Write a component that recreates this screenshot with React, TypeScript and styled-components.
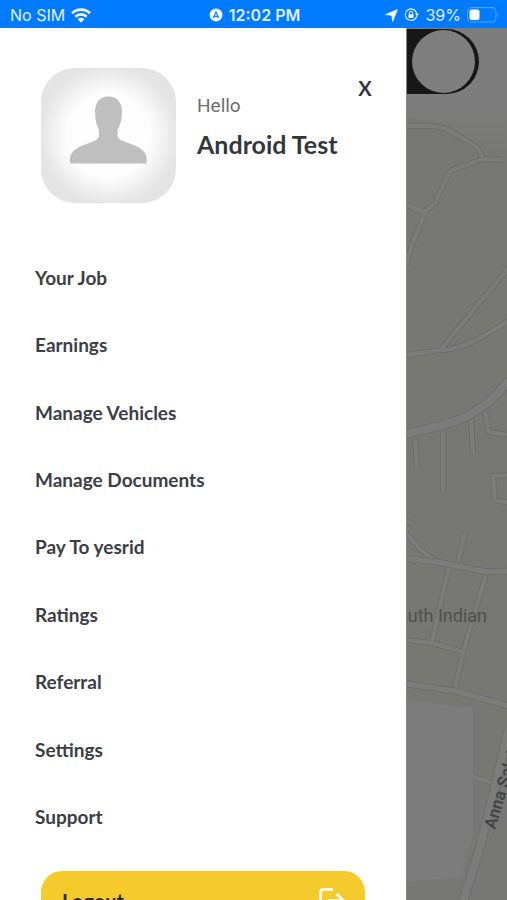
import React, { useState } from "react";
import styled, { createGlobalStyle } from "styled-components";

const GlobalStyle = createGlobalStyle`
  * { box-sizing: border-box; }
  body { margin: 0; background: #ffffff; font-family: Lato, "Noto Sans", sans-serif; }
`;

const Screen = styled.div`
  display: flex;
  flex-direction: column;
  height: 100vh;
  overflow: hidden;
`;

const StatusBar = styled.header`
  flex: none;
  display: grid;
  grid-template-columns: 1fr auto 1fr;
  align-items: center;
  height: 28px;
  padding: 2px 8px 0 10px;
  background: #007aff;
  color: #e2f1ff;
  font: 400 16px/20px Inter, sans-serif;
`;

const StatusGroup = styled.div<{ $end?: boolean }>`
  display: flex;
  align-items: center;
  justify-content: ${(p) => (p.$end ? "flex-end" : "flex-start")};
  gap: 6px;
  white-space: nowrap;
`;

const Clock = styled.time`
  font-weight: 600;
`;

const Body = styled.div`
  flex: 1;
  display: flex;
  min-height: 0;
`;

const Drawer = styled.aside`
  flex: 0 0 80%;
  display: flex;
  flex-direction: column;
  overflow-y: auto;
  scrollbar-width: none;
  background: #ffffff;
  color: #33363d;
`;

const Profile = styled.section`
  flex: none;
  display: flex;
  align-items: flex-start;
  padding: 40px 33px 0 41px;
`;

const Avatar = styled.div`
  flex: none;
  width: 135px;
  height: 135px;
  border-radius: 34px;
  overflow: hidden;
  background: radial-gradient(circle at 50% 50%, #ffffff 0, #fdfdfd 42px, #e4e4e4 70px);
`;

const Greeting = styled.div`
  flex: 1;
  padding: 26px 0 0 21px;
  white-space: nowrap;
`;

const Hello = styled.p`
  margin: 0;
  color: #6e6e6e;
  font: 400 19px/24px Roboto, sans-serif;
`;

const UserName = styled.h1`
  margin: 12px 0 0;
  font-size: 25px;
  line-height: 28px;
  font-weight: 700;
`;

const CloseButton = styled.button`
  margin-top: 8px;
  padding: 0 1px;
  border: 0;
  background: none;
  color: #33363d;
  font: 700 20px/24px Lato, sans-serif;
  cursor: pointer;
`;

const Menu = styled.nav`
  flex: none;
  display: grid;
  grid-auto-rows: 1fr;
  min-height: 607px;
  margin-top: 41px;
`;

const MenuLink = styled.a`
  display: flex;
  align-items: center;
  padding: 0 35px;
  color: #3b3e44;
  font-size: 19px;
  line-height: 24px;
  font-weight: 700;
  text-decoration: none;
`;

const LogoutButton = styled.button`
  flex: none;
  display: flex;
  align-items: center;
  justify-content: space-between;
  height: 60px;
  margin: 20px 41px 24px;
  padding: 0 19px 0 21px;
  border: 0;
  border-radius: 21px;
  background: #f5ca2c;
  color: #2c2c22;
  font: 700 20px/24px Lato, sans-serif;
  cursor: pointer;
`;

const MapPane = styled.main`
  position: relative;
  flex: 1;
  min-width: 0;
  overflow: hidden;
  background: #777774;
  border-left: 1px solid #858585;
`;

const MapDrawing = styled.svg`
  display: block;
  overflow: hidden;
`;

const OnlineSwitch = styled.input`
  appearance: none;
  position: absolute;
  top: 1px;
  left: -58px;
  width: 130px;
  height: 65px;
  margin: 0;
  border-radius: 33px;
  background: #171717;
  cursor: pointer;

  &::before {
    content: "";
    position: absolute;
    top: 1px;
    right: 4px;
    width: 63px;
    height: 63px;
    border-radius: 50%;
    background: #7e7e7e;
  }

  &:not(:checked)::before {
    right: auto;
    left: 3px;
  }
`;

const menuItems = [
  "Your Job",
  "Earnings",
  "Manage Vehicles",
  "Manage Documents",
  "Pay To yesrid",
  "Ratings",
  "Referral",
  "Settings",
  "Support",
];

const streets = [
  "M0 98H24Q37 99 44 103L71 119L77 130",
  "M97 132L76 131L44 143L36 160L29 175L19 184L0 177",
  "M19 184L6 217L0 237",
  "M103 240L69 280L36 320",
  "M0 327L36 322Q51 322 74 310L103 293",
  "M9 412L11 439",
  "M37 404V464",
  "M65 390L67 425",
  "M79 384L83 404L103 407",
  "M104 447L87 448L89 472L104 475",
  "M0 493L7 496",
  "M0 505L17 524L31 534",
  "M59 504L52 534",
  "M43 539L26 614",
  "M80 547L57 624L49 660",
  "M0 612L26 615L57 624",
  "M68 749L86 755",
];

const avenues = [
  "M0 531L31 534L81 544L103 543",
  "M0 656L49 663L103 678",
];

const highways = [
  "M0 406L37 397Q57 392 71 382Q86 374 103 352",
  "M103 700L82 789L71 829L57 874",
];

function Roads({ paths, width }: { paths: string[]; width: number }) {
  return (
    <g fill="none" strokeLinejoin="round">
      <path d={paths.join("")} stroke="#6d6d6c" strokeWidth={width + 2} />
      <path d={paths.join("")} stroke="#7b7c7b" strokeWidth={width} />
    </g>
  );
}

function StreetMap() {
  return (
    <MapDrawing width="101" height="872" viewBox="1 0 101 872" role="img" aria-label="Street map">
      <defs>
        <linearGradient id="topFade" x1="0" y1="0" x2="0" y2="1">
          <stop offset="0.6" stopColor="#7d7d7d" />
          <stop offset="1" stopColor="#7d7d7d" stopOpacity="0" />
        </linearGradient>
      </defs>
      <path d="M0 0H102V127L76 121L44 96L0 90Z" fill="url(#topFade)" />
      <path d="M0 672L67 680V806L55 850L0 853Z" fill="#7c7c7c" />
      <Roads paths={streets} width={4} />
      <Roads paths={avenues} width={5} />
      <Roads paths={highways} width={8} />
      <text x="81" y="594" textAnchor="end" fill="#505050" fontFamily="Roboto, sans-serif" fontSize="18">
        South Indian
      </text>
      <text
        transform="translate(89 802) rotate(-73)"
        fill="#3d4244"
        fontFamily="Roboto, sans-serif"
        fontWeight="500"
        fontSize="17"
      >
        Anna Salai
      </text>
    </MapDrawing>
  );
}

function WifiIcon() {
  return (
    <svg width="20" height="15" viewBox="0 0 20 15" aria-label="Wi-Fi">
      <g fill="none" stroke="#f2f9ff" strokeWidth="2.7">
        <path d="M1 5.2a13 13 0 0 1 18 0" />
        <path d="M4.3 8.7a8.3 8.3 0 0 1 11.4 0" />
      </g>
      <path d="M10 14.7l-3.4-3.5a4.9 4.9 0 0 1 6.8 0z" fill="#f2f9ff" />
    </svg>
  );
}

function NavigationBadge() {
  return (
    <svg width="14" height="14" viewBox="0 0 14 14" aria-hidden="true">
      <circle cx="7" cy="7" r="6.5" fill="#f2f9ff" />
      <path d="M7 2.5l3.4 7.7L7 8.7l-3.4 1.5z" fill="#007aff" />
      <path d="M7 5.2l1.2 2.8L7 7.5l-1.2.5z" fill="#f2f9ff" />
    </svg>
  );
}

function LocationIcon() {
  return (
    <svg width="13" height="13" viewBox="0 0 13 13" aria-hidden="true">
      <path d="M12.5.5L7.7 12.6L6.8 6.4L.4 5.6z" fill="#f2f9ff" stroke="#f2f9ff" strokeWidth=".6" strokeLinejoin="round" />
    </svg>
  );
}

function RotationLockIcon() {
  return (
    <svg width="15" height="14" viewBox="0 0 15 14" aria-hidden="true">
      <path d="M11.8 3.1A5.8 5.8 0 1 0 12.8 8M3.2 2.6A5.8 5.8 0 0 1 12.8 6" fill="none" stroke="#d5eaff" strokeWidth="1.2" />
      <path d="M10.9 5.7h4L13 8.5z" fill="#d5eaff" />
      <rect x="4.5" y="6.2" width="5" height="3.8" rx=".6" fill="#f2f9ff" />
      <path d="M5.4 6.3V5a1.6 1.6 0 0 1 3.2 0v1.3" fill="none" stroke="#f2f9ff" />
    </svg>
  );
}

function BatteryIcon() {
  return (
    <svg width="32" height="16" viewBox="0 0 32 16" aria-hidden="true">
      <rect x=".6" y=".6" width="28.3" height="14.4" rx="4" fill="none" stroke="#4da3ff" strokeWidth="1.1" />
      <rect x="2.5" y="2.5" width="10" height="10.6" rx="2" fill="#ffffff" />
      <path d="M30.2 5.3q2.3 2.5 0 5z" fill="#4da3ff" />
    </svg>
  );
}

function Silhouette() {
  return (
    <svg width="135" height="135" viewBox="0 0 135 135" role="img" aria-label="Profile picture">
      <path
        d="M29 95.5V89Q31 82 40 78L53 73Q58 71 58 67V62Q54 55 54 43Q55 28.5 67.5 28.5Q80 28.5 81 43Q81 55 76.5 62V67Q76.5 71 82 73L95 78Q104 82 105.5 89V95.5Z"
        fill="#bfbfbf"
      />
    </svg>
  );
}

function ExitIcon() {
  return (
    <svg width="28" height="28" viewBox="0 0 28 28" fill="none" stroke="#fffbea" strokeWidth="3" strokeLinejoin="round" aria-hidden="true">
      <path d="M15 2.5H5.5Q2.5 2.5 2.5 5.5V21.5Q2.5 24.5 5.5 24.5H15" />
      <path d="M10 13.5H25M18.500 7L25.500 13.5L18.500 20" />
    </svg>
  );
}

export default function App() {
  const [online, setOnline] = useState(true);

  return (
    <Screen>
      <GlobalStyle />
      <StatusBar>
        <StatusGroup>
          <span>No SIM</span>
          <WifiIcon />
        </StatusGroup>
        <StatusGroup>
          <NavigationBadge />
          <Clock>12:02 PM</Clock>
        </StatusGroup>
        <StatusGroup $end>
          <LocationIcon />
          <RotationLockIcon />
          <span>39%</span>
          <BatteryIcon />
        </StatusGroup>
      </StatusBar>
      <Body>
        <Drawer>
          <Profile>
            <Avatar>
              <Silhouette />
            </Avatar>
            <Greeting>
              <Hello>Hello</Hello>
              <UserName>Android Test</UserName>
            </Greeting>
            <CloseButton type="button" aria-label="Close menu">X</CloseButton>
          </Profile>
          <Menu>
            {menuItems.map((item) => (
              <MenuLink key={item} href="#">
                {item}
              </MenuLink>
            ))}
          </Menu>
          <LogoutButton type="button">
            Logout
            <ExitIcon />
          </LogoutButton>
        </Drawer>
        <MapPane>
          <StreetMap />
          <OnlineSwitch
            type="checkbox"
            role="switch"
            aria-label="Online"
            checked={online}
            onChange={(e) => setOnline(e.target.checked)}
          />
        </MapPane>
      </Body>
    </Screen>
  );
}
